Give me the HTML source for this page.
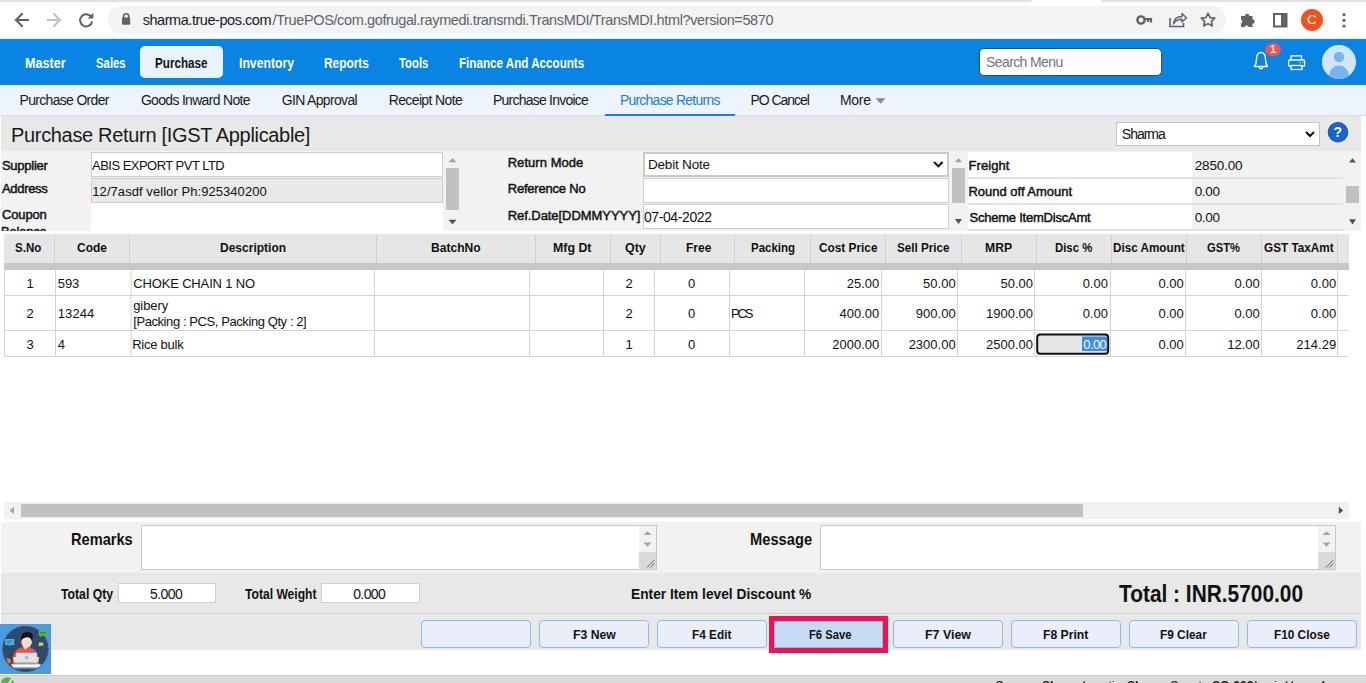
<!DOCTYPE html>
<html><head><meta charset="utf-8">
<style>
*{box-sizing:border-box;margin:0;padding:0}
html,body{width:1366px;height:683px;overflow:hidden;background:#fff;font-family:"Liberation Sans",sans-serif;color:#111}
.a{position:absolute}
.t{position:absolute;white-space:nowrap;line-height:1}
svg{position:absolute;overflow:visible}
</style></head><body>
<!-- chrome -->
<div class="a" style="left:0;top:0;width:1366px;height:2px;background:#dee1e6"></div>
<div class="a" style="left:1031px;top:0;width:71px;height:2px;background:#fff;border-radius:0 0 3px 3px"></div>
<div class="a" style="left:0;top:38px;width:1366px;height:1px;background:#efe9e4"></div>
<div class="a" style="left:108px;top:6px;width:1118px;height:28px;border-radius:14px;background:#f1f3f4"></div>
<svg style="left:0;top:0" width="1366" height="39">
 <g fill="none" stroke-linecap="square" stroke-width="2">
  <path d="M16 20 H28 M22 14 L16 20 L22 26" stroke="#5f6368"/>
  <path d="M48 20 H60 M54 14 L60 20 L54 26" stroke="#bdc1c6"/>
  <path d="M91.3 17 A6.1 6.1 0 1 0 92.2 21.3" stroke="#5f6368" stroke-linecap="butt"/>
 </g>
 <path d="M93.3 12.8 V18.6 H87.5 Z" fill="#5f6368"/>
 <path d="M123.5 18 v-1.6 a2.6 2.6 0 0 1 5.2 0 V18" fill="none" stroke="#5f6368" stroke-width="1.6"/>
 <rect x="122" y="17.6" width="8.2" height="7.2" rx="1" fill="#5f6368"/>
 <!-- key -->
 <circle cx="1141" cy="20" r="3.6" fill="none" stroke="#5f6368" stroke-width="2.4"/>
 <path d="M1144 19 H1151 V22.5 M1148 19 V22" stroke="#5f6368" stroke-width="2.2" fill="none"/>
 <!-- share -->
 <path d="M1170 18 V26.5 H1183.5 V23" fill="none" stroke="#5f6368" stroke-width="1.6"/>
 <path d="M1173.5 24 C1174 18.5 1178 16.5 1182 16.5 V13.5 L1186.5 17.8 L1182 22 V19.3 C1178.5 19.3 1175.5 20.5 1173.5 24 Z" fill="none" stroke="#5f6368" stroke-width="1.4" stroke-linejoin="round"/>
 <!-- star -->
 <path d="M1208 13.2 L1210.1 17.6 L1214.8 18.1 L1211.3 21.3 L1212.3 26 L1208 23.6 L1203.7 26 L1204.7 21.3 L1201.2 18.1 L1205.9 17.6 Z" fill="none" stroke="#5f6368" stroke-width="1.6" stroke-linejoin="round"/>
 <!-- puzzle -->
 <path d="M1241 16 H1245 A2.2 2.2 0 0 1 1249.4 16 H1252.5 V19.3 A2.2 2.2 0 0 1 1252.5 23.7 V27 H1248.7 A2.2 2.2 0 0 0 1244.6 27 H1241 V23.5 A2.2 2.2 0 0 0 1241 19.5 Z" fill="#5f6368"/>
 <!-- sidebar -->
 <rect x="1274" y="14" width="12.5" height="12.5" fill="none" stroke="#5f6368" stroke-width="2"/>
 <rect x="1281" y="14" width="5.5" height="12.5" fill="#5f6368"/>
 <!-- avatar -->
 <circle cx="1312" cy="20" r="11" fill="#f4511e"/>
 <circle cx="1344" cy="14.5" r="1.6" fill="#5f6368"/>
 <circle cx="1344" cy="20.3" r="1.6" fill="#5f6368"/>
 <circle cx="1344" cy="26" r="1.6" fill="#5f6368"/>
</svg>
<div class="t" style="left:1307px;top:13px;font-size:13.5px;color:#fff">C</div>

<!-- nav -->
<div class="a" style="left:0;top:39px;width:1366px;height:46px;background:#0984e3"></div>
<div class="a" style="left:140px;top:46px;width:83px;height:32px;border-radius:5px;background:#eaf3fc"></div>
<div class="a" style="left:979px;top:48px;width:183px;height:27.5px;background:#fff;border:1px solid #2d5a3d;border-radius:5px"></div>
<svg style="left:0;top:0" width="1366" height="85">
 <path d="M1254.5 66.5 C1256.5 64 1256.5 61 1256.5 59 C1256.5 55 1258.5 52.5 1261 52.5 C1263.5 52.5 1265.5 55 1265.5 59 C1265.5 61 1265.5 64 1267.5 66.5 Z" fill="none" stroke="#fff" stroke-width="1.4" stroke-linejoin="round"/>
 <path d="M1259.3 67 a1.8 1.8 0 0 0 3.6 0" fill="none" stroke="#fff" stroke-width="1.3"/>
 <ellipse cx="1273.1" cy="49.5" rx="8" ry="6.8" fill="#ef5350"/>
 <path d="M1291 60 V55.8 H1301.5 V60" fill="none" stroke="#fff" stroke-width="1.3"/>
 <rect x="1288.6" y="60" width="16" height="6.2" rx="1.2" fill="none" stroke="#fff" stroke-width="1.3"/>
 <rect x="1291" y="65.5" width="11" height="4" fill="#0984e3" stroke="#fff" stroke-width="1.3"/>
 <path d="M1299.5 62.5 h1.2 M1302 62.5 h1" stroke="#fff" stroke-width="0.9"/>
 <circle cx="1339" cy="62" r="17" fill="#d0e6fb"/>
 <clipPath id="av"><circle cx="1339" cy="62" r="17"/></clipPath>
 <circle cx="1339" cy="57" r="5.2" fill="#7ab3ee"/>
 <ellipse cx="1339" cy="77" rx="10.3" ry="11.5" fill="#7ab3ee" clip-path="url(#av)"/>
</svg>
<div class="t" style="left:1270.3px;top:45px;font-size:10px;font-weight:bold;color:#fff">1</div>

<!-- sub nav -->
<div class="a" style="left:0;top:85px;width:1366px;height:31px;background:#edf4fc"></div>
<div class="a" style="left:0;top:115px;width:1366px;height:1px;background:#d5dde6"></div>
<div class="a" style="left:605px;top:114px;width:130px;height:2px;background:#1b7ee0"></div>
<svg style="left:0;top:0" width="1366" height="120"><path d="M875.6 98.3 H885.5 L880.55 103.8 Z" fill="#8a8a8a"/></svg>

<!-- title bar + form -->
<div class="a" style="left:1px;top:116px;width:1360px;height:35px;background:#e8e8e8"></div>
<div class="a" style="left:1px;top:151px;width:1360px;height:80px;background:#f2f2f2"></div>
<div class="a" style="left:1116px;top:122px;width:204px;height:24px;background:#fff;border:1px solid #c4c4c4"></div>
<svg style="left:0;top:0" width="1366" height="240">
 <path d="M1306 132 L1310 136 L1314 132" fill="none" stroke="#111" stroke-width="2"/>
 <circle cx="1338" cy="132.2" r="9.8" fill="#1565d8" stroke="#0b3f8c" stroke-width="0.8"/>
</svg>
<div class="t" style="left:1333.5px;top:125px;font-size:14px;font-weight:bold;color:#fff">?</div>
<!-- left panel -->
<div class="a" style="left:91px;top:152px;width:352px;height:25px;background:#fff;border:1px solid #cdcdcd"></div>
<div class="a" style="left:91px;top:178px;width:352px;height:25px;background:#e9e9e9;border:1px solid #cdcdcd"></div>
<div class="a" style="left:91px;top:203px;width:352px;height:28px;background:#fff"></div>
<div class="a" style="left:446px;top:168px;width:13px;height:42px;background:#c1c1c1"></div>
<!-- mid panel -->
<div class="a" style="left:643px;top:152px;width:306px;height:25px;background:#fff;border:2px solid #c9c9c9"></div>
<div class="a" style="left:643px;top:178px;width:306px;height:25px;background:#fff;border:1px solid #cdcdcd"></div>
<div class="a" style="left:643px;top:204px;width:306px;height:25px;background:#fff;border:1px solid #cdcdcd"></div>
<div class="a" style="left:952px;top:168px;width:13px;height:35px;background:#c1c1c1"></div>
<!-- right panel -->
<div class="a" style="left:968px;top:152px;width:224px;height:78px;background:#fff"></div>
<div class="a" style="left:968px;top:177px;width:375px;height:1.5px;background:#e2e2e2"></div>
<div class="a" style="left:968px;top:203px;width:375px;height:1.5px;background:#e2e2e2"></div>
<div class="a" style="left:968px;top:229px;width:375px;height:1.5px;background:#e2e2e2"></div>
<div class="a" style="left:1346px;top:186px;width:13px;height:17px;background:#c1c1c1"></div>
<svg style="left:0;top:0" width="1366" height="240">
 <g fill="#a3a3a3">
  <path d="M448.5 162.3 L452.5 158 L456.5 162.3 Z"/>
  <path d="M955 162.3 L958.5 158 L962 162.3 Z"/>
 </g>
 <g fill="#505050">
  <path d="M448.5 219.8 L456.5 219.8 L452.5 224.3 Z"/>
  <path d="M955 219 L962 219 L958.5 224 Z"/>
  <path d="M1349 162.4 L1356 162.4 L1352.5 158.2 Z"/>
  <path d="M1349 219.2 L1356 219.2 L1352.5 224.4 Z"/>
 </g>
</svg>

<svg style="left:0;top:0" width="1366" height="240"><path d="M934 162 L938.3 166.3 L942.6 162" fill="none" stroke="#111" stroke-width="2"/></svg>
<!-- grid -->
<div class="a" style="left:4px;top:234px;width:1345px;height:29px;background:#e6e6e6"></div>
<div class="a" style="left:4px;top:263px;width:1345px;height:7px;background:#c8c8c8"></div>
<svg style="left:0;top:0" width="1366" height="400">
 <g stroke="#cfcfcf" stroke-width="1">
  <path d="M54.5 234 V263 M129.5 234 V263 M376.5 234 V263 M535.5 234 V263 M610.5 234 V263 M660.5 234 V263 M734.5 234 V263 M810.5 234 V263 M885.5 234 V263 M961.5 234 V263 M1036.5 234 V263 M1111.5 234 V263 M1186.5 234 V263 M1261.5 234 V263 M1337.5 234 V263"/>
 </g>
 <g stroke="#d4d4d4" stroke-width="1">
  <path d="M4.5 270 V357 M55.5 270 V357 M131 270 V357 M374.5 270 V357 M529.5 270 V357 M603.5 270 V357 M654.5 270 V357 M729.5 270 V357 M804.5 270 V357 M881.5 270 V357 M957.5 270 V357 M1034.5 270 V357 M1110.5 270 V357 M1185.5 270 V357 M1261.5 270 V357 M1337.5 270 V357"/>
  <path d="M4 295.5 H1349 M4 330.5 H1349 M4 356.5 H1349"/>
 </g>
 <rect x="1037.2" y="334.5" width="71" height="19.2" rx="3" fill="#e6e6e6" stroke="#111" stroke-width="2"/>
 <rect x="1082" y="336.5" width="25" height="14.5" fill="#3b8ef0"/>
</svg>

<!-- hscroll -->
<div class="a" style="left:4px;top:502px;width:1345px;height:17px;background:#f1f1f1"></div>
<div class="a" style="left:21px;top:504px;width:1062px;height:13px;background:#c1c1c1"></div>
<svg style="left:0;top:0" width="1366" height="683">
 <path d="M14 506.8 V514 L9.9 510.4 Z" fill="#a3a3a3"/>
 <path d="M1338.8 506.8 V514 L1343.2 510.4 Z" fill="#505050"/>
</svg>

<!-- remarks -->
<div class="a" style="left:1px;top:522px;width:1360px;height:51px;background:#f2f2f2"></div>
<div class="a" style="left:141px;top:525px;width:516px;height:45px;background:#fff;border:1px solid #c8c8c8"></div>
<div class="a" style="left:639px;top:526px;width:17px;height:43px;background:#f2f2f2"></div>
<div class="a" style="left:639px;top:552px;width:17px;height:17px;background:#dadada"></div>
<div class="a" style="left:820px;top:525px;width:516px;height:45px;background:#fff;border:1px solid #c8c8c8"></div>
<div class="a" style="left:1318px;top:526px;width:17px;height:43px;background:#f2f2f2"></div>
<div class="a" style="left:1318px;top:552px;width:17px;height:17px;background:#dadada"></div>
<svg style="left:0;top:0" width="1366" height="683">
 <g fill="#a3a3a3">
  <path d="M643.5 535 L651.5 535 L647.5 531.3 Z"/><path d="M643.5 542.5 L651.5 542.5 L647.5 546.7 Z"/>
  <path d="M1322.5 535 L1330.5 535 L1326.5 531.3 Z"/><path d="M1322.5 542.5 L1330.5 542.5 L1326.5 546.7 Z"/>
 </g>
 <g stroke="#555" stroke-width="0.9">
  <path d="M647 567.5 L654.5 560 M650.5 567.5 L654.5 563.5"/>
  <path d="M1326 567.5 L1333.5 560 M1329.5 567.5 L1333.5 563.5"/>
 </g>
</svg>

<!-- totals -->
<div class="a" style="left:1px;top:573px;width:1360px;height:40px;background:#e8e8e8"></div>
<div class="a" style="left:1px;top:612.5px;width:1360px;height:1.5px;background:#d2d2d2"></div>
<div class="a" style="left:117.5px;top:583px;width:98px;height:19.5px;background:#fff;border:1px solid #cfcfcf"></div>
<div class="a" style="left:320.5px;top:583px;width:99px;height:19.5px;background:#fff;border:1px solid #cfcfcf"></div>

<!-- buttons -->
<div class="a" style="left:1px;top:614px;width:1360px;height:36px;background:#e8e8e8"></div>
<div class="a" style="left:421px;top:620px;width:110px;height:28px;background:#e9eef8;border:1px solid #8dbaeb;border-radius:4px"></div>
<div class="a" style="left:539px;top:620px;width:110px;height:28px;background:#e9eef8;border:1px solid #8dbaeb;border-radius:4px"></div>
<div class="a" style="left:657px;top:620px;width:110px;height:28px;background:#e9eef8;border:1px solid #8dbaeb;border-radius:4px"></div>
<div class="a" style="left:769px;top:616px;width:119px;height:37px;background:#c6dcf4;border:5px solid #f0124f;box-shadow:inset 0 0 0 1px #8dbaeb"></div>
<div class="a" style="left:893px;top:620px;width:110px;height:28px;background:#e9eef8;border:1px solid #8dbaeb;border-radius:4px"></div>
<div class="a" style="left:1011px;top:620px;width:110px;height:28px;background:#e9eef8;border:1px solid #8dbaeb;border-radius:4px"></div>
<div class="a" style="left:1129px;top:620px;width:110px;height:28px;background:#e9eef8;border:1px solid #8dbaeb;border-radius:4px"></div>
<div class="a" style="left:1247px;top:620px;width:110px;height:28px;background:#e9eef8;border:1px solid #8dbaeb;border-radius:4px"></div>

<!-- logo -->
<div class="a" style="left:0;top:624px;width:51px;height:50px;background:#4a9be0"></div>
<svg style="left:0;top:624px" width="51" height="50">
 <circle cx="25.4" cy="24.9" r="23" fill="#2b4668"/>
 <circle cx="25.4" cy="24.9" r="22.5" fill="#2d4b6f" stroke="#3a5878" stroke-width="0.8"/>
 <clipPath id="lg"><circle cx="25.4" cy="24.9" r="22.6"/></clipPath>
 <g clip-path="url(#lg)">
  <path d="M12.6 40 C12.6 27 17 23 25.5 23 C34 23 39 27 39 40 Z" fill="#e2574c"/>
  <path d="M22.5 22 L25.5 26 L28.5 22 Z" fill="#f1dcc0"/>
  <path d="M13 33 C13.5 37 14 39 17 40 L19 40 L17 33 Z" fill="#f1dcc0"/>
  <path d="M39 33 C38.5 37 38 39 35 40 L33 40 L35 33 Z" fill="#f1dcc0"/>
  <ellipse cx="26.6" cy="17.8" rx="5.3" ry="5.9" fill="#f5e2c6"/>
  <path d="M21 17 C20 9 25 7.5 28 8 C31.5 8.3 33.5 10 32.8 13.5 C32.3 15.5 32 16 31.8 17 C31 13.5 28 13 26 13.5 C23.5 14 22 15 21 17 Z" fill="#151515"/>
  <rect x="16.2" y="28.8" width="20.6" height="10" rx="0.8" fill="#dfe4e9"/>
  <circle cx="26.5" cy="33.6" r="1.8" fill="#8fb8ee"/>
  <rect x="15" y="38.6" width="23" height="1.8" fill="#9aa0a6"/>
  <path d="M11 40.3 H41.1 L39 43.6 H13 Z" fill="#f7f7f7"/>
  <path d="M13 43.6 H39 L38 44.6 H14 Z" fill="#b0b5ba"/>
 </g>
  <path d="M5.1 15 H14.2 V20.9 H11 L10 22.5 L9 20.9 H5.1 Z" fill="#4cb6d6"/>
  <path d="M6.5 17 h6 M7 19 h4" stroke="#2d5d7a" stroke-width="0.7"/>
  <path d="M38.7 6.3 H47.4 V11.8 H42 L40.5 13.5 L40.5 11.8 H38.7 Z" fill="#5cb548"/>
  <path d="M40 8.8 h5.5" stroke="#2e6a2a" stroke-width="0.8"/>
  <path d="M38.7 18.4 H43.3 V21.7 H40 L39 23 V21.7 H38.7 Z" fill="#e8c23c"/>
  <path d="M6.3 34 L10.7 35 L10.7 39.5 L8 39 Z" fill="#e27a3f"/>
</svg>

<!-- status bar -->
<div class="a" style="left:0;top:675px;width:1366px;height:8px;background:#dadada;border-top:1px solid #c9c9c9"></div>
<svg style="left:0;top:0" width="1366" height="683"><circle cx="7.5" cy="684" r="6.8" fill="#4cb848"/><path d="M4 683 L7 686 L12 679" stroke="#fff" stroke-width="1.5" fill="none"/></svg>
<div class="t" style="left:994.9px;top:680px;font-size:12px;color:#222;font-weight:normal">Company</div><div class="t" style="left:1042px;top:680px;font-size:12px;color:#222;font-weight:bold">Sharma</div><div class="t" style="left:1082.5px;top:680px;font-size:12px;color:#222;font-weight:normal">Location</div><div class="t" style="left:1127px;top:680px;font-size:12px;color:#222;font-weight:bold">Sharma</div><div class="t" style="left:1169.8px;top:680px;font-size:12px;color:#222;font-weight:normal">Counter</div><div class="t" style="left:1212px;top:680px;font-size:12px;color:#222;font-weight:bold">SG-002</div><div class="t" style="left:1254.3px;top:680px;font-size:12px;color:#222;font-weight:normal">Login</div><div class="t" style="left:1285px;top:680px;font-size:12px;color:#222;font-weight:normal">User</div><div class="t" style="left:1310.8px;top:680px;font-size:12px;color:#222;font-weight:bold">ad</div>
<div class="t" style="left:142.70px;top:13.00px;font-size:14.5px;color:#202124;letter-spacing:-0.451px">sharma.true-pos.com</div>
<div class="t" style="left:272.50px;top:13.00px;font-size:14.5px;color:#5f6368;letter-spacing:-0.372px">/TruePOS/com.gofrugal.raymedi.transmdi.TransMDI/TransMDI.html?version=5870</div>
<div class="t" style="left:25.10px;top:56.00px;font-size:14.5px;color:#ffffff;font-weight:bold;transform:scaleX(0.8705);transform-origin:0 0">Master</div>
<div class="t" style="left:95.80px;top:56.00px;font-size:14.5px;color:#ffffff;font-weight:bold;transform:scaleX(0.7825);transform-origin:0 0">Sales</div>
<div class="t" style="left:238.80px;top:56.00px;font-size:14.5px;color:#ffffff;font-weight:bold;transform:scaleX(0.8420);transform-origin:0 0">Inventory</div>
<div class="t" style="left:324.00px;top:56.00px;font-size:14.5px;color:#ffffff;font-weight:bold;transform:scaleX(0.8187);transform-origin:0 0">Reports</div>
<div class="t" style="left:399.10px;top:56.00px;font-size:14.5px;color:#ffffff;font-weight:bold;transform:scaleX(0.7808);transform-origin:0 0">Tools</div>
<div class="t" style="left:459.00px;top:56.00px;font-size:14.5px;color:#ffffff;font-weight:bold;transform:scaleX(0.8024);transform-origin:0 0">Finance And Accounts</div>
<div class="t" style="left:155.40px;top:56.00px;font-size:14.5px;color:#111;font-weight:bold;transform:scaleX(0.8034);transform-origin:0 0">Purchase</div>
<div class="t" style="left:986.10px;top:55.00px;font-size:14px;color:#757575;letter-spacing:-0.618px">Search Menu</div>
<div class="t" style="left:19.50px;top:93.00px;font-size:14px;color:#1a1a1a;letter-spacing:-0.681px">Purchase Order</div>
<div class="t" style="left:140.90px;top:93.00px;font-size:14px;color:#1a1a1a;letter-spacing:-0.690px">Goods Inward Note</div>
<div class="t" style="left:281.70px;top:93.00px;font-size:14px;color:#1a1a1a;letter-spacing:-0.666px">GIN Approval</div>
<div class="t" style="left:388.70px;top:93.00px;font-size:14px;color:#1a1a1a;letter-spacing:-0.622px">Receipt Note</div>
<div class="t" style="left:493.00px;top:93.00px;font-size:14px;color:#1a1a1a;letter-spacing:-0.774px">Purchase Invoice</div>
<div class="t" style="left:750.50px;top:93.00px;font-size:14px;color:#1a1a1a;letter-spacing:-1.048px">PO Cancel</div>
<div class="t" style="left:840.00px;top:93.00px;font-size:14px;color:#1a1a1a;letter-spacing:-0.303px">More</div>
<div class="t" style="left:619.90px;top:93.00px;font-size:14px;color:#1b7ee0;letter-spacing:-0.770px">Purchase Returns</div>
<div class="t" style="left:11.00px;top:125.00px;font-size:20px;color:#1a1a1a;letter-spacing:-0.325px">Purchase Return [IGST Applicable]</div>
<div class="t" style="left:1121.80px;top:127.00px;font-size:14px;color:#111;letter-spacing:-1.007px">Sharma</div>
<div class="t" style="left:1.90px;top:159.00px;font-size:13px;color:#111;-webkit-text-stroke:0.45px #111;letter-spacing:-0.252px">Supplier</div>
<div class="t" style="left:2.00px;top:182.00px;font-size:13px;color:#111;-webkit-text-stroke:0.45px #111;letter-spacing:-0.332px">Address</div>
<div class="t" style="left:2.00px;top:207.50px;font-size:13px;color:#111;-webkit-text-stroke:0.45px #111;letter-spacing:-0.142px">Coupon</div>
<div class="t" style="left:1.00px;top:225.00px;font-size:13px;color:#111;-webkit-text-stroke:0.45px #111;letter-spacing:-0.192px;clip-path:inset(0 0 7px 0)">Balance</div>
<div class="t" style="left:92.00px;top:159.00px;font-size:13px;color:#111;letter-spacing:-0.520px">ABIS EXPORT PVT LTD</div>
<div class="t" style="left:92.30px;top:185.00px;font-size:13px;color:#111;letter-spacing:0.062px">12/7asdf vellor Ph:925340200</div>
<div class="t" style="left:507.70px;top:156.00px;font-size:13px;color:#111;-webkit-text-stroke:0.45px #111;letter-spacing:0.048px">Return Mode</div>
<div class="t" style="left:507.70px;top:182.00px;font-size:13px;color:#111;-webkit-text-stroke:0.45px #111;letter-spacing:-0.198px">Reference No</div>
<div class="t" style="left:507.70px;top:209.00px;font-size:13px;color:#111;-webkit-text-stroke:0.45px #111;letter-spacing:-0.055px">Ref.Date[DDMMYYYY]</div>
<div class="t" style="left:648.00px;top:158.00px;font-size:13.5px;color:#111;letter-spacing:-0.197px">Debit Note</div>
<div class="t" style="left:643.90px;top:210.00px;font-size:14px;color:#111;letter-spacing:-0.392px">07-04-2022</div>
<div class="t" style="left:968.50px;top:159.00px;font-size:13px;color:#111;-webkit-text-stroke:0.45px #111;letter-spacing:0.075px">Freight</div>
<div class="t" style="left:968.50px;top:185.00px;font-size:13px;color:#111;-webkit-text-stroke:0.45px #111;letter-spacing:-0.016px">Round off Amount</div>
<div class="t" style="left:969.50px;top:211.00px;font-size:13px;color:#111;-webkit-text-stroke:0.45px #111;letter-spacing:-0.227px">Scheme ItemDiscAmt</div>
<div class="t" style="left:1194.70px;top:159.00px;font-size:13.5px;color:#111;letter-spacing:-0.149px">2850.00</div>
<div class="t" style="left:1194.70px;top:185.00px;font-size:13.5px;color:#111;letter-spacing:-0.322px">0.00</div>
<div class="t" style="left:1194.70px;top:211.00px;font-size:13.5px;color:#111;letter-spacing:-0.322px">0.00</div>
<div class="t" style="left:15.40px;top:241.00px;font-size:13px;color:#111;font-weight:bold;transform:scaleX(0.8898);transform-origin:0 0">S.No</div>
<div class="t" style="left:76.70px;top:241.00px;font-size:13px;color:#111;font-weight:bold;transform:scaleX(0.9235);transform-origin:0 0">Code</div>
<div class="t" style="left:219.50px;top:241.00px;font-size:13px;color:#111;font-weight:bold;transform:scaleX(0.9249);transform-origin:0 0">Description</div>
<div class="t" style="left:431.10px;top:241.00px;font-size:13px;color:#111;font-weight:bold;transform:scaleX(0.9307);transform-origin:0 0">BatchNo</div>
<div class="t" style="left:553.00px;top:241.00px;font-size:13px;color:#111;font-weight:bold;transform:scaleX(0.9514);transform-origin:0 0">Mfg Dt</div>
<div class="t" style="left:624.50px;top:241.00px;font-size:13px;color:#111;font-weight:bold;transform:scaleX(0.9536);transform-origin:0 0">Qty</div>
<div class="t" style="left:685.50px;top:241.00px;font-size:13px;color:#111;font-weight:bold;transform:scaleX(0.9218);transform-origin:0 0">Free</div>
<div class="t" style="left:751.20px;top:241.00px;font-size:13px;color:#111;font-weight:bold;transform:scaleX(0.8835);transform-origin:0 0">Packing</div>
<div class="t" style="left:819.10px;top:241.00px;font-size:13px;color:#111;font-weight:bold;transform:scaleX(0.9099);transform-origin:0 0">Cost Price</div>
<div class="t" style="left:897.30px;top:241.00px;font-size:13px;color:#111;font-weight:bold;transform:scaleX(0.8970);transform-origin:0 0">Sell Price</div>
<div class="t" style="left:985.10px;top:241.00px;font-size:13px;color:#111;font-weight:bold;transform:scaleX(0.9378);transform-origin:0 0">MRP</div>
<div class="t" style="left:1055.10px;top:241.00px;font-size:13px;color:#111;font-weight:bold;transform:scaleX(0.8730);transform-origin:0 0">Disc %</div>
<div class="t" style="left:1112.60px;top:241.00px;font-size:13px;color:#111;font-weight:bold;transform:scaleX(0.8993);transform-origin:0 0">Disc Amount</div>
<div class="t" style="left:1207.20px;top:241.00px;font-size:13px;color:#111;font-weight:bold;transform:scaleX(0.8599);transform-origin:0 0">GST%</div>
<div class="t" style="left:1264.40px;top:241.00px;font-size:13px;color:#111;font-weight:bold;transform:scaleX(0.9033);transform-origin:0 0">GST TaxAmt</div>
<div class="t" style="left:26.40px;top:277.00px;font-size:13px;color:#111">1</div>
<div class="t" style="left:26.50px;top:307.00px;font-size:13px;color:#111">2</div>
<div class="t" style="left:26.50px;top:338.00px;font-size:13px;color:#111">3</div>
<div class="t" style="left:57.70px;top:277.00px;font-size:13px;color:#111;letter-spacing:-0.030px">593</div>
<div class="t" style="left:57.70px;top:307.00px;font-size:13px;color:#111;letter-spacing:0.120px">13244</div>
<div class="t" style="left:57.70px;top:338.00px;font-size:13px;color:#111">4</div>
<div class="t" style="left:133.20px;top:277.00px;font-size:13px;color:#111;letter-spacing:-0.149px">CHOKE CHAIN 1 NO</div>
<div class="t" style="left:133.20px;top:299.30px;font-size:13px;color:#111;letter-spacing:-0.081px">gibery</div>
<div class="t" style="left:133.20px;top:314.50px;font-size:13px;color:#111;letter-spacing:-0.416px">[Packing : PCS, Packing Qty : 2]</div>
<div class="t" style="left:132.20px;top:338.00px;font-size:13px;color:#111;letter-spacing:-0.246px">Rice bulk</div>
<div class="t" style="left:625.50px;top:277.00px;font-size:13px;color:#111">2</div>
<div class="t" style="left:625.50px;top:307.00px;font-size:13px;color:#111">2</div>
<div class="t" style="left:625.50px;top:338.00px;font-size:13px;color:#111">1</div>
<div class="t" style="left:688.00px;top:277.00px;font-size:13px;color:#111">0</div>
<div class="t" style="left:688.00px;top:307.00px;font-size:13px;color:#111">0</div>
<div class="t" style="left:688.00px;top:338.00px;font-size:13px;color:#111">0</div>
<div class="t" style="left:730.90px;top:307.00px;font-size:13px;color:#111;letter-spacing:-2.080px">PCS</div>
<div class="t" style="left:846.70px;top:277.00px;font-size:13px;color:#111">25.00</div>
<div class="t" style="left:923.10px;top:277.00px;font-size:13px;color:#111">50.00</div>
<div class="t" style="left:1000.50px;top:277.00px;font-size:13px;color:#111">50.00</div>
<div class="t" style="left:1082.63px;top:277.00px;font-size:13px;color:#111">0.00</div>
<div class="t" style="left:1158.43px;top:277.00px;font-size:13px;color:#111">0.00</div>
<div class="t" style="left:1234.53px;top:277.00px;font-size:13px;color:#111">0.00</div>
<div class="t" style="left:1310.83px;top:277.00px;font-size:13px;color:#111">0.00</div>
<div class="t" style="left:839.47px;top:307.00px;font-size:13px;color:#111">400.00</div>
<div class="t" style="left:915.87px;top:307.00px;font-size:13px;color:#111">900.00</div>
<div class="t" style="left:986.04px;top:307.00px;font-size:13px;color:#111">1900.00</div>
<div class="t" style="left:1082.63px;top:307.00px;font-size:13px;color:#111">0.00</div>
<div class="t" style="left:1158.43px;top:307.00px;font-size:13px;color:#111">0.00</div>
<div class="t" style="left:1234.53px;top:307.00px;font-size:13px;color:#111">0.00</div>
<div class="t" style="left:1310.83px;top:307.00px;font-size:13px;color:#111">0.00</div>
<div class="t" style="left:832.24px;top:338.00px;font-size:13px;color:#111">2000.00</div>
<div class="t" style="left:908.64px;top:338.00px;font-size:13px;color:#111">2300.00</div>
<div class="t" style="left:986.04px;top:338.00px;font-size:13px;color:#111">2500.00</div>
<div class="t" style="left:1158.43px;top:338.00px;font-size:13px;color:#111">0.00</div>
<div class="t" style="left:1227.30px;top:338.00px;font-size:13px;color:#111">12.00</div>
<div class="t" style="left:1296.37px;top:338.00px;font-size:13px;color:#111">214.29</div>
<div class="t" style="left:1083.30px;top:338.00px;font-size:13px;color:#ffffff;letter-spacing:-0.624px">0.00</div>
<div class="t" style="left:71.21px;top:531.00px;font-size:16.5px;color:#111;font-weight:bold;transform:scaleX(0.8856);transform-origin:0 0">Remarks</div>
<div class="t" style="left:749.91px;top:531.00px;font-size:16.5px;color:#111;font-weight:bold;transform:scaleX(0.8901);transform-origin:0 0">Message</div>
<div class="t" style="left:61.10px;top:586.50px;font-size:14px;color:#111;font-weight:bold;transform:scaleX(0.8739);transform-origin:0 0">Total Qty</div>
<div class="t" style="left:150.10px;top:586.50px;font-size:14px;color:#111;letter-spacing:-0.587px">5.000</div>
<div class="t" style="left:244.70px;top:586.50px;font-size:14px;color:#111;font-weight:bold;transform:scaleX(0.8647);transform-origin:0 0">Total Weight</div>
<div class="t" style="left:353.20px;top:586.50px;font-size:14px;color:#111;letter-spacing:-0.612px">0.000</div>
<div class="t" style="left:630.58px;top:586.00px;font-size:15px;color:#111;font-weight:bold;transform:scaleX(0.9167);transform-origin:0 0">Enter Item level Discount %</div>
<div class="t" style="left:1118.50px;top:583.00px;font-size:23.5px;color:#111;font-weight:bold;transform:scaleX(0.8882);transform-origin:0 0">Total : INR.5700.00</div>
<div class="t" style="left:572.60px;top:628.20px;font-size:13.5px;color:#111;font-weight:bold;transform:scaleX(0.9045);transform-origin:0 0">F3 New</div>
<div class="t" style="left:691.90px;top:628.20px;font-size:13.5px;color:#111;font-weight:bold;transform:scaleX(0.8768);transform-origin:0 0">F4 Edit</div>
<div class="t" style="left:808.90px;top:628.20px;font-size:13.5px;color:#111;font-weight:bold;transform:scaleX(0.8307);transform-origin:0 0">F6 Save</div>
<div class="t" style="left:924.80px;top:628.20px;font-size:13.5px;color:#111;font-weight:bold;transform:scaleX(0.9184);transform-origin:0 0">F7 View</div>
<div class="t" style="left:1043.30px;top:628.20px;font-size:13.5px;color:#111;font-weight:bold;transform:scaleX(0.9003);transform-origin:0 0">F8 Print</div>
<div class="t" style="left:1160.30px;top:628.20px;font-size:13.5px;color:#111;font-weight:bold;transform:scaleX(0.8774);transform-origin:0 0">F9 Clear</div>
<div class="t" style="left:1274.00px;top:628.20px;font-size:13.5px;color:#111;font-weight:bold;transform:scaleX(0.8745);transform-origin:0 0">F10 Close</div>
</body></html>
